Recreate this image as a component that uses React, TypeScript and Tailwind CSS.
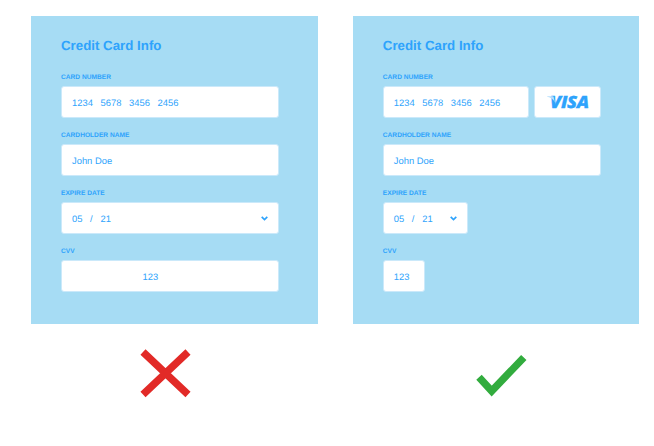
import type { ReactNode } from 'react';

function Field({ label, children }: { label: string; children: ReactNode }) {
  return (
    <div className="h-[58px]">
      <div className="h-[14px] pt-[1px] whitespace-nowrap text-[6.6px] leading-[10px] font-bold tracking-[0.02px]">{label}</div>
      <div className="flex gap-[5.5px]">{children}</div>
    </div>
  );
}

function Box({ className, children }: { className: string; children: ReactNode }) {
  return (
    <div
      className={`flex h-[32px] items-center rounded-[3px] border border-[#cbe9fa] bg-white pt-[2px] text-[9.4px] leading-[12px] whitespace-pre ${className}`}
    >
      {children}
    </div>
  );
}

function CardDigits() {
  return (
    <div className="flex">
      {['1234', '5678', '3456', '2456'].map((group, i) => (
        <span key={i} className="w-[28.5px]">{group}</span>
      ))}
    </div>
  );
}

function DateValue() {
  return (
    <div className="flex">
      <span className="w-[18px]">05</span>
      <span className="w-[10.5px]">/</span>
      <span>21</span>
    </div>
  );
}

function Chevron() {
  return (
    <svg className="mb-[2px] ml-auto h-[5px] w-[7px]" viewBox="0 0 7 5" fill="none" stroke="#2ea3fc" strokeWidth="1.7">
      <path d="M.7 .8 3.5 3.5 6.3 .8" />
    </svg>
  );
}

function VisaLogo() {
  return (
    <svg className="mb-[2px] h-[22px] w-[44px] overflow-visible" viewBox="0 0 44 22">
      <text
        x="0"
        y="0"
        fill="#2ea3fc"
        stroke="#2ea3fc"
        strokeWidth=".3"
        transform="translate(4 17.4) scale(1.09 1)"
        className="font-['Open_Sans',sans-serif] text-[16.8px] leading-none font-extrabold tracking-[-0.3px] italic"
      >
        VISA
      </text>
      <path d="M1.2 5.3h5.2c.8 0 1.2.4 1.4 1.1l1 5C7.5 8.3 5 6.6 1.2 5.8Z" fill="#b5defd" />
    </svg>
  );
}

function Panel({ children }: { children: ReactNode }) {
  return (
    <section className="h-[308px] w-[286.5px] shrink-0 bg-[#a6dcf4] pt-[21px] pl-[30px]">
      <h2 className="h-[35px] whitespace-nowrap text-[13.3px] leading-[18px] font-bold">Credit Card Info</h2>
      {children}
    </section>
  );
}

export default function App() {
  return (
    <main className="h-[446px] w-[654px] overflow-hidden bg-white pt-[16px] pl-[31px] font-['Liberation_Sans',Arial,sans-serif] text-[#2ea3fc] [text-rendering:geometricPrecision]">
      <div className="flex gap-[35.3px]">
        <Panel>
          <Field label="CARD NUMBER">
            <Box className="w-[218px] pl-[10px]"><CardDigits /></Box>
          </Field>
          <Field label="CARDHOLDER NAME">
            <Box className="w-[218px] pl-[10px]">John Doe</Box>
          </Field>
          <Field label="EXPIRE DATE">
            <Box className="w-[218px] pr-[10px] pl-[10px]"><DateValue /><Chevron /></Box>
          </Field>
          <Field label="CVV">
            <Box className="w-[218px] pl-[80.5px]">123</Box>
          </Field>
        </Panel>
        <Panel>
          <Field label="CARD NUMBER">
            <Box className="w-[146px] pl-[10px]"><CardDigits /></Box>
            <Box className="w-[66.5px] justify-center"><VisaLogo /></Box>
          </Field>
          <Field label="CARDHOLDER NAME">
            <Box className="w-[218px] pl-[10px]">John Doe</Box>
          </Field>
          <Field label="EXPIRE DATE">
            <Box className="w-[85px] pr-[10px] pl-[10px]"><DateValue /><Chevron /></Box>
          </Field>
          <Field label="CVV">
            <Box className="w-[42px] pl-[10px]">123</Box>
          </Field>
        </Panel>
      </div>
      <div className="flex pt-[24px] pl-[108px]">
        <svg className="h-[50px] w-[53px]" viewBox="0 0 53 50" stroke="#e22a27" strokeWidth="7.4">
          <path d="M4 4 49 46.5M49 4 4 46.5" />
        </svg>
        <svg className="mt-[5px] ml-[284px] h-[45px] w-[52px]" viewBox="0 0 52 45" fill="none" stroke="#32ac3e" strokeWidth="7.4">
          <path d="M3 24.3 15.7 38 47.8 4.5" />
        </svg>
      </div>
    </main>
  );
}
